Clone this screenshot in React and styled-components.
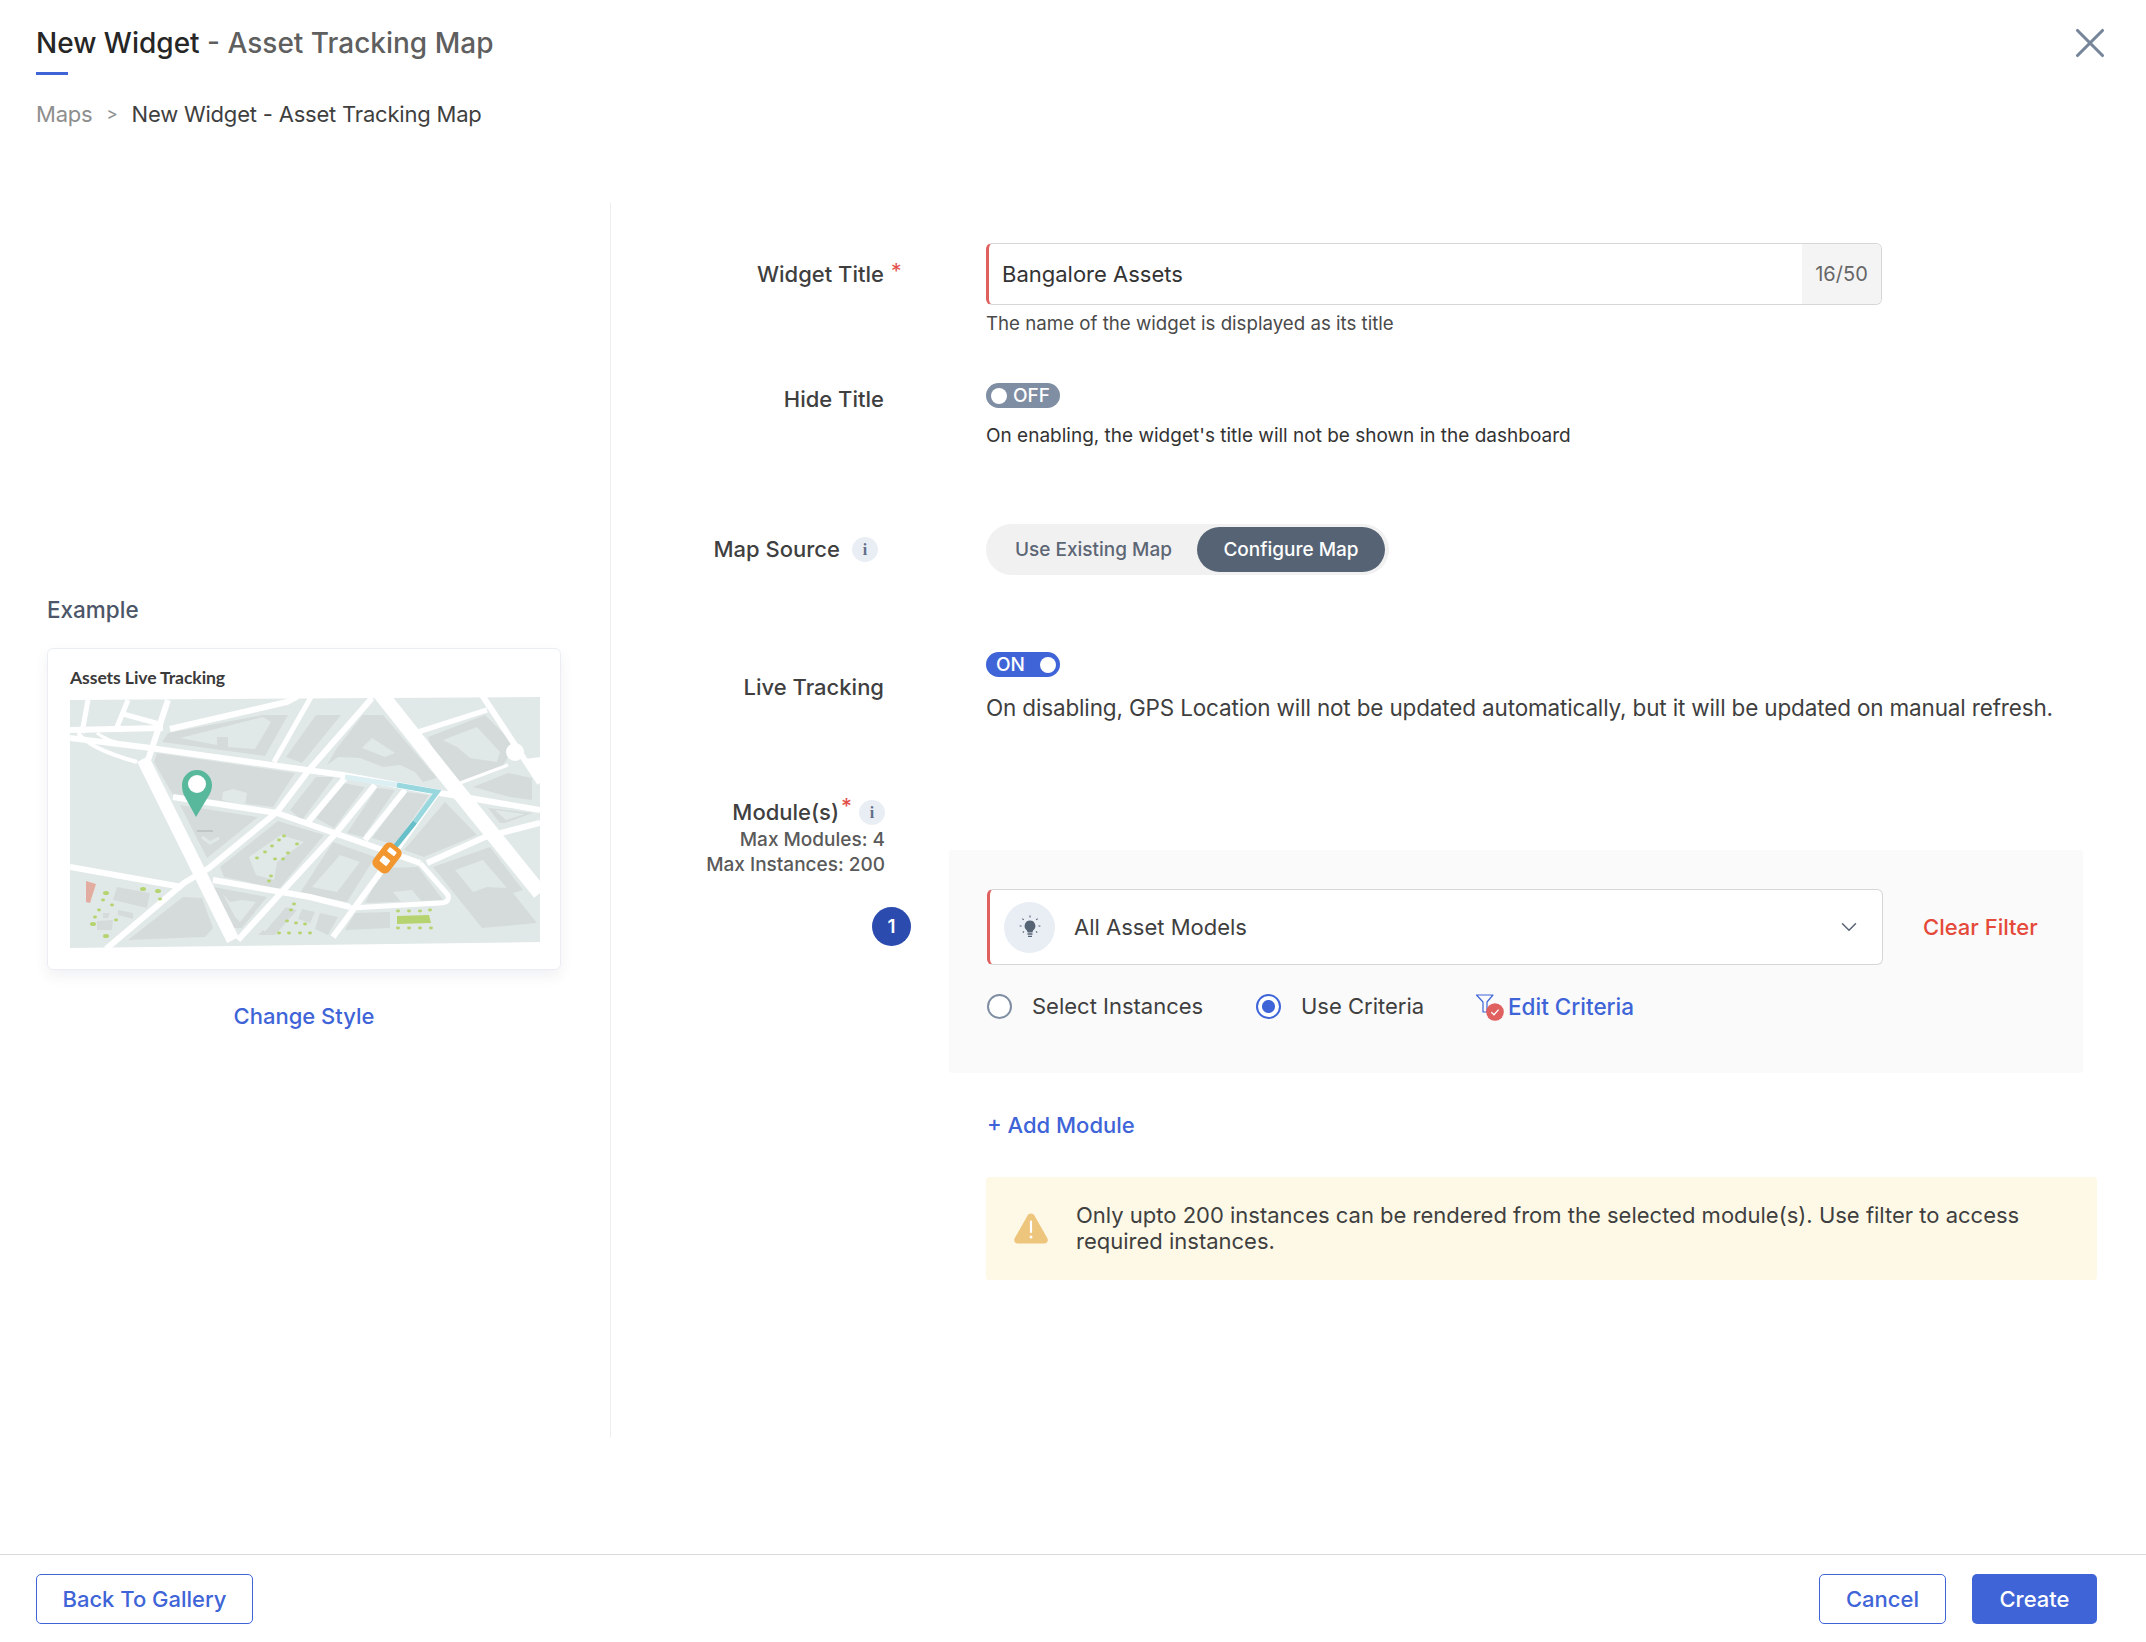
import React from 'react'
import styled, { createGlobalStyle } from 'styled-components'
import { X, ChevronDown } from 'lucide-react'

const GlobalStyle = createGlobalStyle`
  html, body {
    margin: 0;
    padding: 0;
    background: #fff;
  }
  * {
    box-sizing: border-box;
  }
  body {
    font-family: Inter, "Noto Sans", sans-serif;
    color: #3b3b3b;
  }
`

const BLOCKS = [
  [[92,45],[98,36],[193,18],[218,18],[195,59]],
  [[87,56],[225,76],[203,110],[103,98],[84,65]],
  [[110,108],[188,120],[137,161]],
  [[208,124],[254,138],[209,192],[154,180],[150,170]],
  [[58,243],[113,200],[132,201],[143,231],[135,240]],
  [[143,190],[197,200],[172,231],[163,231]],
  [[216,60],[246,18],[271,18],[232,66]],
  [[293,18],[313,18],[367,81],[353,85],[345,75],[330,68],[313,70],[290,61],[268,60],[257,68],[267,51]],
  [[358,40],[415,18],[445,48],[438,60],[432,70],[388,86],[362,51]],
  [[403,90],[438,76],[462,81],[462,103],[440,100]],
  [[418,111],[463,116],[435,126],[430,126]],
  [[220,113],[246,80],[264,80],[232,123]],
  [[246,121],[273,86],[295,90],[264,131]],
  [[277,136],[307,91],[325,93],[293,140]],
  [[302,141],[336,95],[359,98],[325,148]],
  [[334,153],[375,105],[407,138],[354,160]],
  [[263,145],[305,160],[277,205],[230,196]],
  [[313,171],[348,170],[373,203],[295,206]],
  [[275,233],[285,216],[320,215],[320,231]],
  [[363,170],[420,150],[453,193],[443,196],[467,226],[412,231]],
  [[47,190],[80,196],[77,211],[43,203]],
  [[48,213],[63,216],[63,222],[48,218]],
  [[27,224],[43,223],[42,233],[27,233]],
  [[33,216],[40,216],[38,221],[33,221]],
  [[192,238],[216,210],[227,213],[205,238]],
  [[188,238],[193,233],[200,238]],
  [[232,212],[245,215],[240,226],[228,222]],
  [[250,216],[268,220],[258,238],[245,232]],
]

const HOLES = [
  [[110,41],[147,48],[147,40],[158,40],[158,50],[185,52],[201,25],[193,20]],
  [[152,103],[153,95],[163,92],[177,96],[175,108]],
  [[179,160],[211,138],[234,145],[207,165],[204,183],[186,178]],
  [[153,197],[160,205],[172,203],[186,205],[170,225],[165,220]],
  [[292,51],[302,41],[325,56],[315,60]],
  [[373,43],[407,30],[430,55],[427,65],[400,61],[387,50]],
  [[425,113],[455,117],[436,123]],
  [[270,158],[290,165],[267,195],[242,190]],
  [[323,195],[342,193],[352,205],[332,206]],
  [[385,173],[413,163],[437,191],[417,190],[403,195]],
]

const ROADS = [
  { d: 'M73 62 L163 243', w: 13 },
  { d: 'M0 41 L73 50 L237 73 L273 78 L370 96 L470 113', w: 6 },
  { d: 'M0 33 L93 31', w: 6 },
  { d: 'M100 32 L217 5 L228 -1', w: 6 },
  { d: 'M310 -4 L387 93 L470 196', w: 15 },
  { d: 'M302 1 L239 73 L207 115 L139 171 L114 186 L36 252', w: 6 },
  { d: 'M0 170 L112 190', w: 6 },
  { d: 'M143 183 L240 200 L280 210', w: 6 },
  { d: 'M280 211 L370 206 Q380 206 378 198 L350 166', w: 5 },
  { d: 'M207 116 L350 166', w: 6 },
  { d: 'M103 100 L207 116', w: 6 },
  { d: 'M241 0 L204 65', w: 5 },
  { d: 'M275 81 L238 125', w: 6 },
  { d: 'M305 88 L266 136 L209 198 L168 243', w: 6 },
  { d: 'M335 93 L295 143', w: 6 },
  { d: 'M367 96 L310 176 L263 240', w: 6 },
  { d: 'M412 -2 L470 86', w: 6 },
  { d: 'M348 35 L417 13', w: 5 },
  { d: 'M390 86 L438 68', w: 3 },
  { d: 'M357 166 L415 140 L470 126', w: 6 },
  { d: 'M18 3 L12 36', w: 5 },
  { d: 'M58 3 L47 30', w: 5 },
  { d: 'M98 3 L78 63', w: 6 },
  { d: 'M53 17 L93 28', w: 5 },
  { d: 'M8 36 Q20 52 67 65', w: 4 },
  { d: 'M27 36 Q37 44 57 48', w: 3 },
  { d: 'M72 66 L80 62', w: 6 },
]

const DOTS = [
  [36,196,3],[73,192,3],[88,194,3],[23,227,3],[36,239,3],[46,223,2],[33,203,2],[42,208,2],[29,213,2],[25,220,2],[90,202,2],
  [214,139,2],[202,149,2],[209,143,2],[227,147,2],[218,156,2],[195,155,2],[187,161,2],[205,162,2],[213,162,2],[201,179,2],[199,184,2],
  [224,207,2],[221,213,2],[217,224,2],[226,226,2],[235,227,2],[209,236,2],[219,236,2],[230,236,2],[240,236,2],
  [328,214,2],[339,214,2],[350,214,2],[360,213,2],[328,231,2],[339,231,2],[350,231,2],[361,231,2],
]

const toPoints = pts => pts.map(p => p.join(',')).join(' ')

const MapArt = () => (
  <MapSvg viewBox="0 0 470 251">
    <polygon points="0,3 470,0 470,245 0,251" fill="#e1e9e8" />
    {BLOCKS.map((b, i) => <polygon key={i} points={toPoints(b)} fill="#d5dbda" />)}
    {HOLES.map((b, i) => <polygon key={i} points={toPoints(b)} fill="#e1e9e8" />)}
    {ROADS.map((r, i) => <path key={i} d={r.d} stroke="#fff" strokeWidth={r.w} fill="none" />)}
    <circle cx="445" cy="55" r="9" fill="#fff" />
    <polygon points="470,60 470,86 455,62" fill="#fff" />
    <path d="M127 134 H143" stroke="#b9bfbe" strokeWidth="1.5" />
    <path d="M132 140 L140 146 L149 141" stroke="#e1e9e8" strokeWidth="3" fill="none" />
    <polygon points="16,184 26,187 20,206 16,205" fill="#e3aca0" />
    <polygon points="327,219 359,218 361,226 327,227" fill="#b5d36f" />
    {DOTS.map(([x, y, r], i) => <ellipse key={i} cx={x} cy={y} rx={r} ry={r * 0.7} fill="#b5d36f" />)}
    <path d="M275 80 L327 88" stroke="#dceff2" strokeWidth="5" fill="none" />
    <path d="M327 88 L367 95 L345 125" stroke="#98d7de" strokeWidth="5" fill="none" />
    <path d="M345 125 L325 150" stroke="#67bfc9" strokeWidth="5" fill="none" />
    <g transform="rotate(38 317 161)">
      <rect x="307" y="146" width="20" height="30" rx="6" fill="#f2962f" />
      <rect x="312.5" y="150.5" width="9" height="5" rx="1" fill="#fff" />
      <rect x="312.5" y="161" width="9" height="7" rx="1" fill="#fff" />
    </g>
    <path d="M127 73 a15 15 0 0 1 15 15 c0 5 -2 9 -4 12 L126 120 L115 100 c-2 -3 -3 -7 -3 -12 a15 15 0 0 1 15 -15 z" fill="#58b89b" />
    <circle cx="127" cy="87" r="9" fill="#fff" />
  </MapSvg>
)

const LampIcon = () => (
  <svg width="26" height="26" viewBox="0 0 26 26" fill="none">
    <path d="M13 6.5 a5.4 5.4 0 0 1 3.6 9.4 c-.9.8 -1 1.6 -1.1 2.6 h-5 c-.1 -1 -.2 -1.8 -1.1 -2.6 A5.4 5.4 0 0 1 13 6.5 z" fill="#566374" />
    <path d="M10.5 20 h5 M11 22.4 h4" stroke="#566374" strokeWidth="1.4" />
    <path d="M13 1.5 v2 M5.4 4.6 l1.3 1.3 M20.6 4.6 l-1.3 1.3 M2.6 12 h2 M21.4 12 h2 M5.8 18.6 l1.2 -1.2 M20.2 18.6 l-1.2 -1.2" stroke="#566374" strokeWidth="1.1" />
  </svg>
)

const FilterCheckIcon = () => (
  <IconSvg width="30" height="30" viewBox="0 0 30 30" fill="none">
    <path d="M1.5 4 H18 L12 11 V21 H8 V11 Z" stroke="#3e64d8" strokeWidth="1.2" strokeLinejoin="round" />
    <circle cx="20" cy="21" r="8.8" fill="#e05f5f" />
    <path d="M16.3 21.3 L19 23.8 L23.6 18.6" stroke="#fff" strokeWidth="1.3" />
  </IconSvg>
)

const WarnIcon = () => (
  <IconSvg width="38" height="34" viewBox="0 0 38 34">
    <path d="M19 2.5 c1.6 0 2.8 .9 3.6 2.3 L35.2 27 c1.4 2.6 .2 5.5 -3 5.5 H5.8 c-3.2 0 -4.4 -2.9 -3 -5.5 L15.4 4.8 c.8 -1.4 2 -2.3 3.6 -2.3 z" fill="#edc57c" />
    <path d="M19 10.5 V21" stroke="#fff" strokeWidth="2.2" strokeLinecap="round" />
    <circle cx="19" cy="26" r="1.5" fill="#fff" />
  </IconSvg>
)

const App = () => {
  return (
    <Page>
      <GlobalStyle />
      <Header>
        <HeaderTop>
          <Title><strong>New Widget</strong> - Asset Tracking Map</Title>
          <CloseIcon><X size={50} strokeWidth={1.5} /></CloseIcon>
        </HeaderTop>
        <TitleRule />
        <Crumbs>
          <span>Maps</span>
          <CrumbSep>&gt;</CrumbSep>
          <CrumbCurrent>New Widget - Asset Tracking Map</CrumbCurrent>
        </Crumbs>
      </Header>

      <Body>
        <Aside>
          <ExampleLabel>Example</ExampleLabel>
          <ExampleCard>
            <ExampleTitle>Assets Live Tracking</ExampleTitle>
            <MapArt />
          </ExampleCard>
          <ChangeStyle>Change Style</ChangeStyle>
        </Aside>

        <Form>
          <Row $top={40}>
            <Label $pad={16}>Widget Title</Label>
            <Adorn $pad={17}><Star>*</Star></Adorn>
            <div>
              <InputBox>
                <InputText>Bangalore Assets</InputText>
                <Counter>16/50</Counter>
              </InputBox>
              <Help $top={7} $size={18.7} $color="#4a4a4a">The name of the widget is displayed as its title</Help>
            </div>
          </Row>

          <Row $top={47}>
            <Label $pad={1}>Hide Title</Label>
            <span />
            <div>
              <Toggle $on={false}><Knob />OFF</Toggle>
              <Help $top={16} $size={19} $color="#333">On enabling, the widget's title will not be shown in the dashboard</Help>
            </div>
          </Row>

          <Row $top={76}>
            <Label $pad={10} $inset={6}>Map Source<InfoBadge $gap={12}>i</InfoBadge></Label>
            <span />
            <Segment>
              <SegmentItem>Use Existing Map</SegmentItem>
              <SegmentItem $active>Configure Map</SegmentItem>
            </Segment>
          </Row>

          <Row $top={77}>
            <Label $pad={20}>Live Tracking</Label>
            <span />
            <div>
              <Toggle $on>ON<Knob /></Toggle>
              <LongHelp>On disabling, GPS Location will not be updated automatically, but it will be updated on manual refresh.</LongHelp>
            </div>
          </Row>

          <Modules>
            <ModuleSide>
              <ModuleLabel $pad={0}>
                Module(s)<TopStar>*</TopStar><InfoBadge $gap={7}>i</InfoBadge>
              </ModuleLabel>
              <MaxNote>Max Modules: 4</MaxNote>
              <MaxNote>Max Instances: 200</MaxNote>
              <NumberBadge>1</NumberBadge>
            </ModuleSide>
            <ModulePanel>
              <SelectRow>
                <SelectBox>
                  <LampCircle><LampIcon /></LampCircle>
                  <SelectText>All Asset Models</SelectText>
                  <ChevronDown size={26} strokeWidth={1.4} color="#5a6678" />
                </SelectBox>
                <ClearFilter>Clear Filter</ClearFilter>
              </SelectRow>
              <RadioRow>
                <RadioItem $width={269}>
                  <Radio />
                  <span>Select Instances</span>
                </RadioItem>
                <RadioItem $width={219}>
                  <Radio $checked />
                  <span>Use Criteria</span>
                </RadioItem>
                <EditCriteria><FilterCheckIcon /><span>Edit Criteria</span></EditCriteria>
              </RadioRow>
            </ModulePanel>
          </Modules>

          <AddModule>+ Add Module</AddModule>

          <Warning>
            <WarnIcon />
            <WarningText>Only upto 200 instances can be rendered from the selected module(s). Use filter to access required instances.</WarningText>
          </Warning>
        </Form>
      </Body>

      <Footer>
        <OutlineButton $width={217}>Back To Gallery</OutlineButton>
        <FooterRight>
          <OutlineButton $width={127}>Cancel</OutlineButton>
          <PrimaryButton>Create</PrimaryButton>
        </FooterRight>
      </Footer>
    </Page>
  )
}

const Page = styled.div`
  width: 2146px;
  height: 1642px;
  display: flex;
  flex-direction: column;
  background: #fff;
  overflow: hidden;
`

const Header = styled.header`
  height: 203px;
  padding: 24px 31px 0 36px;
`

const HeaderTop = styled.div`
  display: flex;
  justify-content: space-between;
  align-items: center;
  height: 38px;
`

const Title = styled.h1`
  margin: 0;
  font-size: 28px;
  line-height: 38px;
  font-weight: 500;
  color: #5f5f5f;
  strong {
    font-weight: 500;
    color: #262626;
  }
`

const CloseIcon = styled.div`
  display: flex;
  color: #76859a;
`

const TitleRule = styled.div`
  width: 32px;
  height: 3px;
  margin-top: 10px;
  background: #3e64d8;
`

const Crumbs = styled.nav`
  display: flex;
  align-items: center;
  margin-top: 24px;
  font-size: 22px;
  letter-spacing: -0.2px;
  line-height: 30px;
  color: #8e8e8e;
`

const CrumbSep = styled.span`
  margin: 0 14px;
  font-size: 17px;
`

const CrumbCurrent = styled.span`
  color: #3f3f3f;
`

const Body = styled.main`
  display: flex;
  align-items: flex-start;
  height: 1351px;
`

const Aside = styled.aside`
  width: 611px;
  height: 1234px;
  flex-shrink: 0;
  border-right: 1px solid #eee;
  padding: 392px 49px 0 47px;
`

const ExampleLabel = styled.div`
  font-size: 22.5px;
  line-height: 30px;
  font-weight: 500;
  color: #4c5668;
`

const ExampleCard = styled.div`
  margin-top: 23px;
  height: 322px;
  padding: 19px 22px;
  background: #fff;
  border: 1px solid #eaeef4;
  border-radius: 6px;
  box-shadow: 0 6px 14px rgba(40, 60, 90, 0.07);
`

const ExampleTitle = styled.div`
  font-family: Lato, sans-serif;
  font-size: 17.6px;
  font-weight: 700;
  line-height: 20px;
  color: #3a3a3a;
  letter-spacing: -0.1px;
`

const MapSvg = styled.svg`
  display: block;
  width: 470px;
  height: 251px;
  margin-top: 9px;
`

const ChangeStyle = styled.a`
  display: block;
  margin-top: 31px;
  font-size: 22px;
  line-height: 30px;
  font-weight: 500;
  text-align: center;
  color: #3e64d8;
`

const Form = styled.section`
  flex: 1;
  min-width: 0;
`

const Row = styled.div`
  display: grid;
  grid-template-columns: 273px 102px 1fr;
  margin-top: ${props => props.$top}px;
  padding-right: 49px;
`

const Label = styled.div`
  display: flex;
  justify-content: flex-end;
  align-items: center;
  align-self: start;
  padding-top: ${props => props.$pad}px;
  padding-right: ${props => props.$inset || 0}px;
  font-size: 22px;
  line-height: 30px;
  font-weight: 500;
  color: #3f3f3f;
`

const ModuleLabel = styled(Label)`
  align-self: flex-end;
`

const Adorn = styled.div`
  padding-top: ${props => props.$pad}px;
  padding-left: 7px;
`

const Star = styled.span`
  display: block;
  font-size: 21px;
  line-height: 24px;
  color: #e2504c;
`

const InputBox = styled.div`
  display: flex;
  width: 896px;
  height: 62px;
  border: 1px solid #d6d6d6;
  border-left: 3px solid #e05f5f;
  border-radius: 6px;
  background: #fff;
  overflow: hidden;
`

const InputText = styled.div`
  flex: 1;
  padding-left: 13px;
  font-size: 22px;
  line-height: 60px;
  color: #333;
`

const Counter = styled.div`
  width: 79px;
  background: #f4f4f4;
  font-size: 20px;
  line-height: 60px;
  text-align: center;
  color: #666;
`

const Help = styled.div`
  margin-top: ${props => props.$top}px;
  font-size: ${props => props.$size}px;
  line-height: 24px;
  color: ${props => props.$color};
`

const LongHelp = styled.div`
  margin-top: 16px;
  font-size: 22.5px;
  letter-spacing: -0.16px;
  line-height: 30px;
  color: #3f3f3f;
`

const Toggle = styled.div`
  display: flex;
  align-items: center;
  justify-content: space-between;
  width: 74px;
  height: 25px;
  padding: 0 ${props => (props.$on ? 4 : 10)}px 0 ${props => (props.$on ? 10 : 5)}px;
  border-radius: 13px;
  background: ${props => (props.$on ? '#3e64d8' : '#7f8ea3')};
  color: #fff;
  font-size: 19px;
  font-weight: 500;
`

const Knob = styled.span`
  width: 16px;
  height: 16px;
  border-radius: 50%;
  background: #fff;
`

const InfoBadge = styled.span`
  flex-shrink: 0;
  width: 26px;
  height: 25px;
  margin-left: ${props => props.$gap}px;
  border-radius: 50%;
  background: #e9eef5;
  color: #5f6f86;
  font-family: "Liberation Serif", serif;
  font-size: 16px;
  font-weight: 700;
  line-height: 25px;
  text-align: center;
`

const Segment = styled.div`
  display: flex;
  align-items: center;
  justify-content: space-between;
  width: 403px;
  height: 51px;
  padding: 0 4px 0 29px;
  border-radius: 26px;
  background: #f1f1f1;
`

const SegmentItem = styled.div`
  font-size: 19px;
  font-weight: 500;
  line-height: 45px;
  color: ${props => (props.$active ? '#fff' : '#5d6675')};
  ${props => props.$active && `
    width: 188px;
    text-align: center;
    border-radius: 23px;
    background: #566374;
  `}
`

const Modules = styled.div`
  display: grid;
  grid-template-columns: 338px 1134px;
  margin-top: 4px;
`

const ModuleSide = styled.div`
  display: flex;
  flex-direction: column;
  align-items: flex-end;
  padding: 70px 64px 0 0;
`

const TopStar = styled.span`
  align-self: flex-start;
  margin-left: 2px;
  font-size: 21px;
  line-height: 20px;
  color: #e2504c;
`

const MaxNote = styled.div`
  font-size: 19px;
  line-height: 25px;
  font-weight: 500;
  color: #5a5a5a;
`

const NumberBadge = styled.div`
  width: 39px;
  height: 39px;
  margin: 30px -26px 0 0;
  border-radius: 50%;
  background: #2b4bae;
  color: #fff;
  font-size: 19px;
  font-weight: 600;
  line-height: 39px;
  text-align: center;
`

const ModulePanel = styled.div`
  margin-top: 123px;
  height: 223px;
  padding: 39px 0 0 38px;
  border-radius: 3px;
  background: #fafafa;
`

const SelectRow = styled.div`
  display: flex;
  align-items: center;
  gap: 40px;
`

const SelectBox = styled.div`
  display: flex;
  align-items: center;
  width: 896px;
  height: 76px;
  padding: 0 20px 0 14px;
  border: 1px solid #d6d6d6;
  border-left: 3px solid #e05f5f;
  border-radius: 6px;
  background: #fff;
`

const LampCircle = styled.div`
  display: flex;
  align-items: center;
  justify-content: center;
  width: 51px;
  height: 51px;
  border-radius: 50%;
  background: #e9eef5;
`

const SelectText = styled.div`
  flex: 1;
  padding-left: 19px;
  font-size: 22px;
  color: #3f3f3f;
`

const ClearFilter = styled.a`
  font-size: 22px;
  font-weight: 500;
  color: #e5493a;
`

const RadioRow = styled.div`
  display: flex;
  align-items: center;
  height: 30px;
  margin-top: 26px;
`

const RadioItem = styled.label`
  display: flex;
  align-items: center;
  gap: 20px;
  width: ${props => props.$width}px;
  font-size: 22px;
  color: #3f3f3f;
`

const Radio = styled.span`
  width: 25px;
  height: 25px;
  flex-shrink: 0;
  border-radius: 50%;
  border: 2px solid ${props => (props.$checked ? '#3e64d8' : '#7f8ea3')};
  background: ${props => (props.$checked ? 'radial-gradient(circle, #3e64d8 0 6px, #fff 7px)' : '#fff')};
`

const EditCriteria = styled.a`
  display: flex;
  align-items: center;
  gap: 3px;
  font-size: 22.5px;
  font-weight: 500;
  color: #3e64d8;
`

const IconSvg = styled.svg`
  flex-shrink: 0;
`

const AddModule = styled.a`
  display: block;
  margin: 37px 0 0 376px;
  font-size: 22px;
  line-height: 30px;
  font-weight: 500;
  color: #3e64d8;
`

const Warning = styled.div`
  display: flex;
  align-items: center;
  gap: 26px;
  width: 1111px;
  height: 103px;
  margin: 37px 0 0 375px;
  padding: 0 60px 2px 26px;
  border-radius: 3px;
  background: #fef9e7;
`

const WarningText = styled.div`
  font-size: 22px;
  line-height: 26px;
  color: #3f3f3f;
`

const Footer = styled.footer`
  flex: 1;
  display: flex;
  justify-content: space-between;
  align-items: flex-start;
  padding: 19px 49px 0 36px;
  border-top: 1px solid #d9d9d9;
`

const FooterRight = styled.div`
  display: flex;
  gap: 26px;
`

const OutlineButton = styled.button`
  width: ${props => props.$width}px;
  height: 50px;
  border: 1px solid #3e64d8;
  border-radius: 5px;
  background: #fff;
  color: #3e64d8;
  font-family: inherit;
  font-size: 22px;
  font-weight: 500;
`

const PrimaryButton = styled.button`
  width: 125px;
  height: 50px;
  border: 0;
  border-radius: 5px;
  background: #3e64d8;
  color: #fff;
  font-family: inherit;
  font-size: 22px;
  font-weight: 500;
`

export default App
